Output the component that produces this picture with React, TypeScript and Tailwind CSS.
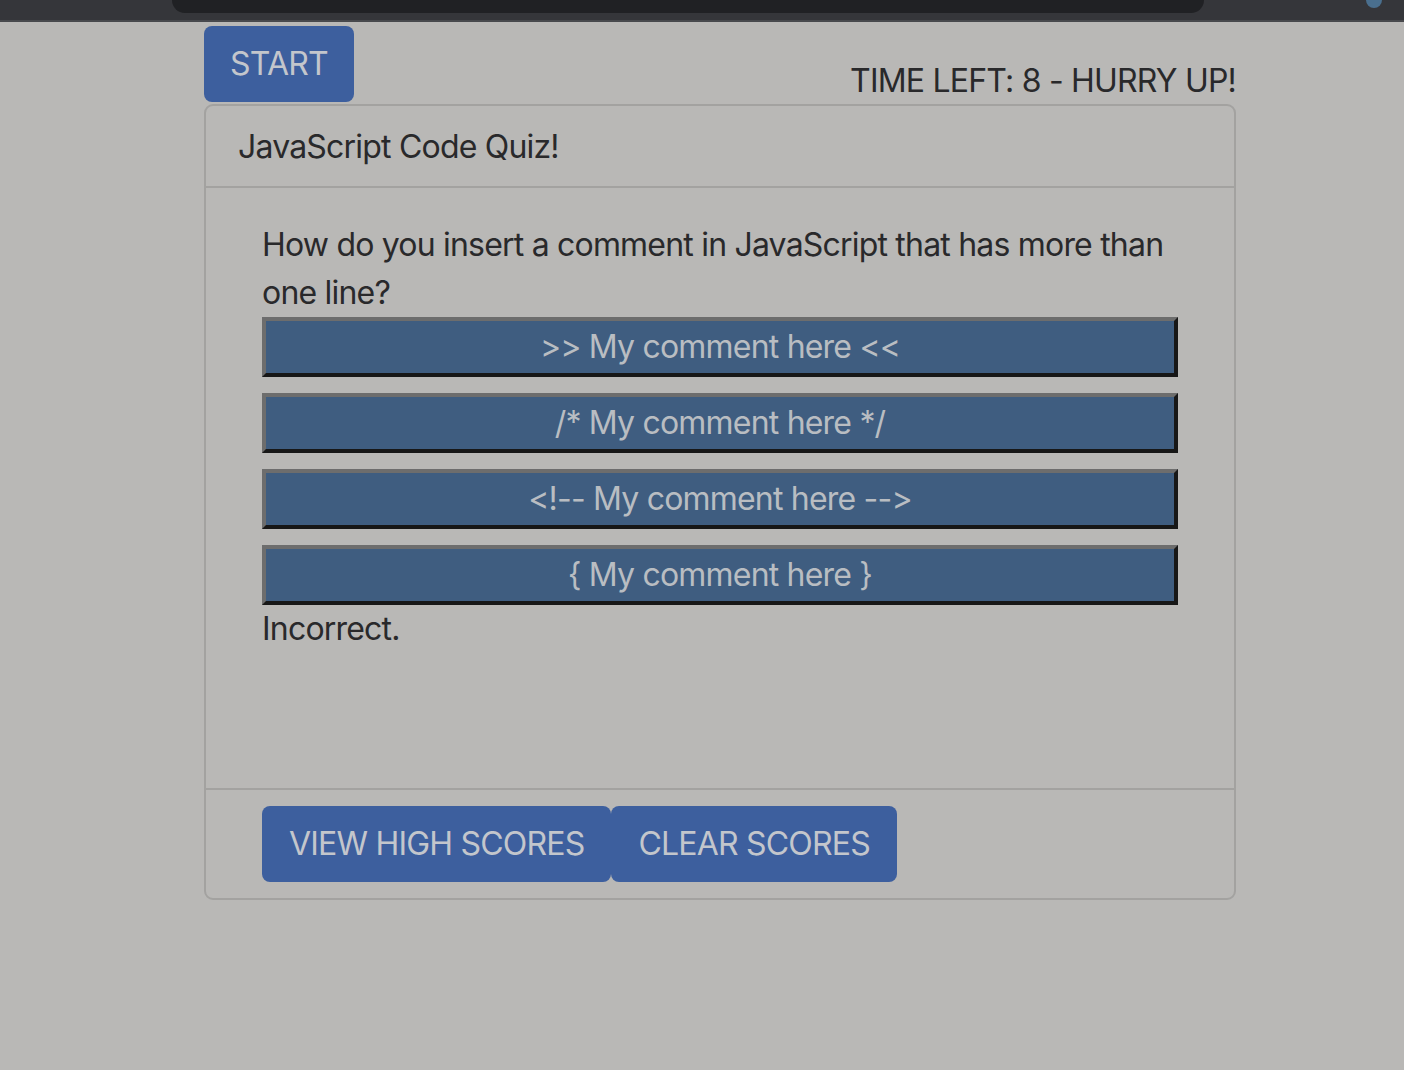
export default function App() {
  const answers = [
    ">> My comment here <<",
    "/* My comment here */",
    "<!-- My comment here -->",
    "{ My comment here }",
  ]

  return (
    <div
      className="min-h-[1070px] w-full bg-[#b9b8b6] text-[#29292b] tracking-[-0.8px] [font-feature-settings:'calt'_0,'liga'_0]"
      style={{ fontFamily: "Inter, 'Liberation Sans', sans-serif" }}
    >
      {/* browser chrome strip */}
      <div className="relative h-[22px] bg-[#35363a] border-b-2 border-[#48494d]">
        <div className="absolute left-[172px] top-0 h-[13px] w-[1032px] rounded-b-[13px] bg-[#202124]" />
        <div className="absolute left-[1366px] top-0 h-[8px] w-[16px] rounded-b-full bg-[#4a6f8e]" />
      </div>

      <div className="ml-[204px] w-[1032px] pt-[4px]">
        <div className="flex items-end justify-between">
          <button className="h-[76px] w-[150px] rounded-[8px] bg-[#3d5f9e] text-[32px] text-[#c3c6cc]">
            START
          </button>
          <div className="mb-[-3px] text-[32px] leading-[48px]">TIME LEFT: 8 - HURRY UP!</div>
        </div>

        <div className="mt-[2px] rounded-[9px] border-2 border-[#a3a2a0]">
          <div className="h-[82px] border-b-2 border-[#a3a2a0] pl-[32px] pt-[17px] text-[32px] leading-[48px]">
            JavaScript Code Quiz!
          </div>

          <div className="h-[600px] px-[56px] pt-[33px] text-[32px] leading-[48px]">
            <p>How do you insert a comment in JavaScript that has more than one line?</p>
            <div className="flex flex-col gap-[16px]">
              {answers.map((a) => (
                <button
                  key={a}
                  className="h-[60px] w-full border-4 border-t-[#6d6d6d] border-l-[#6d6d6d] border-b-[#171717] border-r-[#171717] bg-[#3f5d80] text-[32px] leading-[48px] text-[#b9bdc2]"
                >
                  {a}
                </button>
              ))}
            </div>
            <p>Incorrect.</p>
          </div>

          <div className="flex border-t-2 border-[#a3a2a0] px-[56px] pb-[16px] pt-[16px]">
            <button className="h-[76px] rounded-[8px] bg-[#3d5f9e] px-[27px] text-[32px] text-[#c3c6cc]">
              VIEW HIGH SCORES
            </button>
            <button className="h-[76px] rounded-[8px] bg-[#3d5f9e] px-[27px] text-[32px] text-[#c3c6cc]">
              CLEAR SCORES
            </button>
          </div>
        </div>
      </div>
    </div>
  )
}
